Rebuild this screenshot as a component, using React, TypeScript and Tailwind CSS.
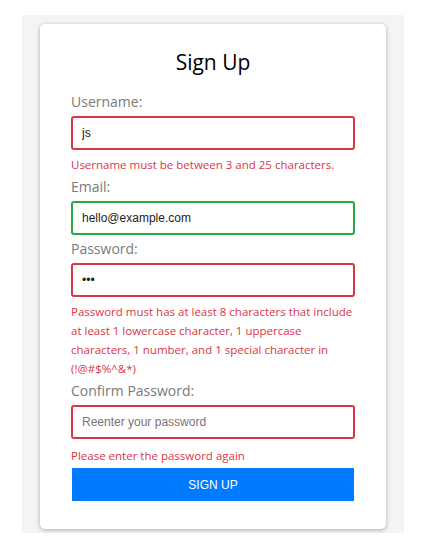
export default function App() {
  const label = "block text-[14px] leading-[21px] text-[#7a7a7a] mb-[4px]";
  const input =
    "block w-full h-[34px] rounded-[3px] border-2 bg-white px-[9px] text-[12px] text-[#222] outline-none placeholder:text-[#757575]";
  const error = "mt-[5px] mb-[2px] text-[11.5px] leading-[19px] text-[#dc3545]";
  const arial = { fontFamily: '"Liberation Sans", Arial, sans-serif' };

  return (
    <div className="min-h-[541px] bg-white pt-[15px] pl-[22px]" style={{ fontFamily: '"Open Sans", sans-serif' }}>
      <div className="w-[382px] bg-[#f4f4f4] px-[18px] pt-[9px] pb-[4px]">
        <form className="rounded-[5px] bg-white px-[31px] pt-[24px] pb-[28px] shadow-[0_1px_4px_rgba(0,0,0,0.3)]">
          <h1 className="mb-[15px] text-center text-[21px] leading-[28px] text-black">Sign Up</h1>

          <label className={label}>Username:</label>
          <input className={`${input} border-[#dc3545]`} style={arial} defaultValue="js" />
          <p className={error}>Username must be between 3 and 25 characters.</p>

          <label className={label}>Email:</label>
          <input className={`${input} border-[#28a745]`} style={arial} defaultValue="hello@example.com" />

          <label className={`${label} mt-[3px]`}>Password:</label>
          <input type="password" className={`${input} border-[#dc3545]`} style={arial} defaultValue="abc" />
          <p className={error}>
            Password must has at least 8 characters that include at least 1 lowercase character, 1 uppercase
            characters, 1 number, and 1 special character in (!@#$%^&amp;*)
          </p>

          <label className={`${label} mt-[1px]`}>Confirm Password:</label>
          <input
            type="password"
            className={`${input} border-[#dc3545]`}
            style={arial}
            placeholder="Reenter your password"
          />
          <p className="mt-[7px] text-[11.5px] leading-[19px] text-[#dc3545]">Please enter the password again</p>

          <button
            type="button"
            className="mx-[1px] mt-[3px] block h-[33px] w-[282px] bg-[#007bff] text-[12px] uppercase text-white"
            style={arial}
          >
            Sign Up
          </button>
        </form>
      </div>
    </div>
  );
}
